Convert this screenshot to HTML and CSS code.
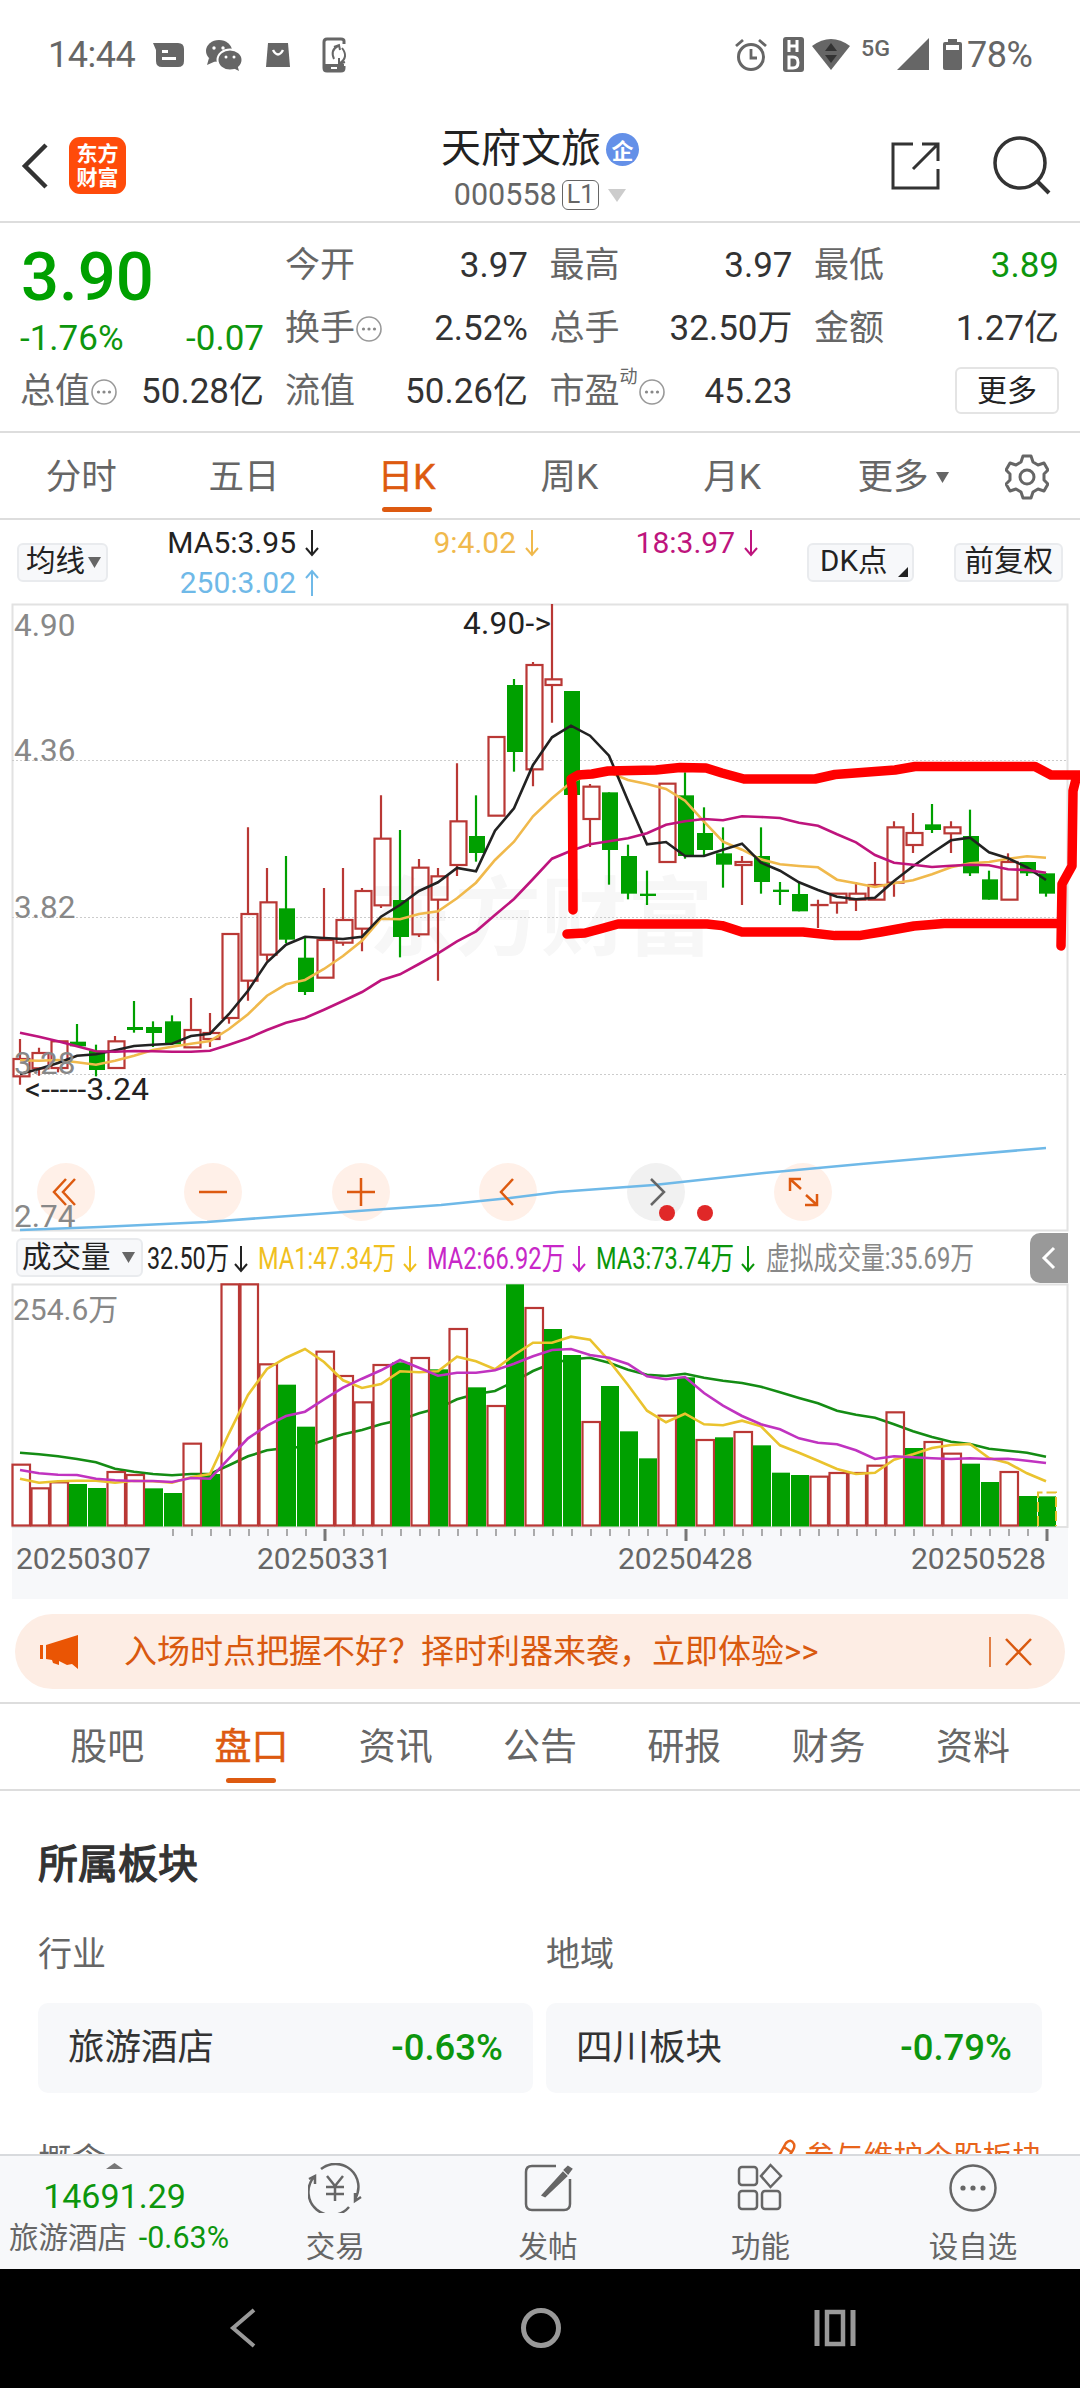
FILE: index.html
```html
<!DOCTYPE html>
<html lang="zh-CN">
<head>
    <meta charset="UTF-8">
    <meta name="viewport" content="width=device-width, initial-scale=1.0">
    <title>天府文旅 000558</title>
    <link rel="stylesheet" href="styles.css">
</head>
<body>
    <svg width="0" height="0" class="defs">
        <symbol id="down" viewBox="0 0 16 30"><path d="M8 2V27M2 20L8 27L14 20" fill="none" stroke="currentColor" stroke-width="2"/></symbol>
        <symbol id="up" viewBox="0 0 16 30"><path d="M8 28V3M2 10L8 3L14 10" fill="none" stroke="currentColor" stroke-width="2"/></symbol>
        <symbol id="info" viewBox="0 0 26 26"><circle cx="13" cy="13" r="12" fill="none" stroke="#999" stroke-width="1.6"/><g fill="#888"><circle cx="7.5" cy="13" r="1.6"/><circle cx="13" cy="13" r="1.6"/><circle cx="18.5" cy="13" r="1.6"/></g></symbol>
    </svg>

    <div class="status-bar">
        <span class="clock">14:44</span>
        <svg class="status-left" width="200" height="40" viewBox="150 36 200 40" fill="#666">
            <path d="M153 43H178Q184 43 184 49V61Q184 67 178 67H162Q156 67 156 61V50Z"/>
            <path d="M162 50H168V53H162ZM162 57H176V60H162Z" fill="#fff"/>
            <ellipse cx="219" cy="51" rx="13" ry="11"/><path d="M209 58L207 65L216 61Z"/>
            <ellipse cx="230" cy="60" rx="12.500" ry="10.500" stroke="#fff" stroke-width="2"/><path d="M233 68L239 71L237 64Z"/>
            <g fill="#fff"><circle cx="214" cy="48" r="1.700"/><circle cx="223" cy="48" r="1.700"/><circle cx="226" cy="57" r="1.500"/><circle cx="234" cy="57" r="1.500"/></g>
            <path d="M268 43H288L290 67H266Z"/>
            <path d="M273 50Q278 59 283 50" fill="none" stroke="#fff" stroke-width="2.500"/>
            <path d="M344 44V41Q344 39 341 39H327Q324 39 324 42V68Q324 71 327 71H341Q344 71 344 68V66" fill="none" stroke="#666" stroke-width="3"/>
            <path d="M324 64H344V70H324Z"/><path d="M331 67H337V69H331Z" fill="#fff"/>
            <path d="M334 59Q330 50 338 46M334 47L339 45L340 50M342 48Q349 57 340 63M339 58L339 64L345 62" fill="none" stroke="#666" stroke-width="2"/>
        </svg>
        <svg class="status-right" width="235" height="40" viewBox="732 36 235 40" fill="#666">
            <circle cx="751" cy="57" r="12.500" fill="none" stroke="#666" stroke-width="3"/>
            <path d="M751 49V58H757M736 46L743 40M766 46L759 40" fill="none" stroke="#666" stroke-width="2.800"/>
            <rect x="783" y="37" width="21" height="35" rx="3"/>
            <path d="M789 40V52M797 40V52M789 46H797M789 57V68H793Q798 68 798 62.500Q798 57 793 57Z" fill="none" stroke="#fff" stroke-width="3"/>
            <path d="M812 46Q831 32 850 46L831 70Z"/><path d="M831 43L837 51H825ZM831 63L837 55H825Z" fill="#333"/>
            <text x="861" y="56" font-size="22" font-weight="500" textLength="29" lengthAdjust="spacingAndGlyphs">5G</text>
            <path d="M929 38V70H897Z"/>
            <path d="M948 39H957V42H960Q962 42 962 44V68Q962 70 960 70H945Q943 70 943 68V44Q943 42 945 42H948Z"/><path d="M946 45H959V50H946Z" fill="#fff"/>
        </svg>
        <span class="battery">78%</span>
    </div>

    <header class="header">
        <svg class="back" width="28" height="50" viewBox="0 0 28 50"><path d="M25 4L4 25L25 46" fill="none" stroke="#333" stroke-width="4.500"/></svg>
        <div class="logo"><span>东方</span><span>财富</span></div>
        <div class="stock">
            <div class="stock-name">天府文旅<i>企</i></div>
            <div class="stock-code">000558<b>L1</b><svg width="18" height="13"><path d="M0 0H18L9 13Z" fill="#ccc"/></svg></div>
        </div>
        <svg class="share" width="50" height="50" viewBox="0 0 50 50"><path d="M22 3H2V47H47V28M31 3H47V20M47 3L22 28" fill="none" stroke="#333" stroke-width="3"/></svg>
        <svg class="search" width="58" height="60" viewBox="0 0 58 60"><circle cx="27" cy="27" r="25" fill="none" stroke="#333" stroke-width="3.500"/><path d="M44 45L56 57" stroke="#333" stroke-width="4"/></svg>
    </header>

    <section class="quote">
        <div class="quote-main">
            <div class="price">3.90</div>
            <div class="change"><span>-1.76%</span><span>-0.07</span></div>
            <div class="cell"><label>总值<svg class="info"><use href="#info"/></svg></label><span>50.28亿</span></div>
        </div>
        <div class="quote-grid">
            <div class="cell"><label>今开</label><span>3.97</span></div>
            <div class="cell"><label>最高</label><span>3.97</span></div>
            <div class="cell"><label>最低</label><span class="green">3.89</span></div>
            <div class="cell"><label>换手<svg class="info"><use href="#info"/></svg></label><span>2.52%</span></div>
            <div class="cell"><label>总手</label><span>32.50万</span></div>
            <div class="cell"><label>金额</label><span>1.27亿</span></div>
            <div class="cell"><label>流值</label><span>50.26亿</span></div>
            <div class="cell"><label>市盈<sup>动</sup><svg class="info"><use href="#info"/></svg></label><span>45.23</span></div>
            <div class="cell cell-end"><button class="more">更多</button></div>
        </div>
    </section>

    <nav class="periods">
        <a>分时</a><a>五日</a><a class="active">日K</a><a>周K</a><a>月K</a>
        <a>更多<svg width="13" height="11"><path d="M0 0H13L6.500 11Z" fill="#666"/></svg></a>
        <a><svg width="44" height="46" viewBox="0 0 44 46"><path d="M18 2H26L28 8L33 11L39 9L43 16L39 20V26L43 30L39 37L33 35L28 38L26 44H18L16 38L11 35L5 37L1 30L5 26V20L1 16L5 9L11 11L16 8Z" fill="none" stroke="#666" stroke-width="3" stroke-linejoin="round"/><circle cx="22" cy="23" r="7" fill="none" stroke="#666" stroke-width="3"/></svg></a>
    </nav>

    <div class="ma-row">
        <span class="chip">均线<svg width="13" height="11"><path d="M0 0H13L6.500 11Z" fill="#666"/></svg></span>
        <div class="ma-values">
            <span class="ma5">MA5:3.95<svg><use href="#down"/></svg></span>
            <span class="ma9">9:4.02<svg><use href="#down"/></svg></span>
            <span class="ma18">18:3.97<svg><use href="#down"/></svg></span>
            <span class="ma250">250:3.02<svg><use href="#up"/></svg></span>
        </div>
        <span class="chip dk">DK点<svg width="10" height="10"><path d="M10 0V10H0Z" fill="#222"/></svg></span>
        <span class="chip">前复权</span>
    </div>

    <svg class="chart" width="1080" height="629" viewBox="0 0 1080 629">
        <text x="369" y="346" class="watermark">东方财富</text>
        <path d="M12.500 627.500V1.500H1067.500V627.500Z" class="frame"/>
        <path d="M12 157.500H1067M12 314.500H1067M12 471.500H1067" class="grid"/>
        <g fill="#fff0e8">
            <circle cx="66" cy="589" r="29"/><circle cx="213" cy="589" r="29"/><circle cx="361" cy="589" r="29"/>
            <circle cx="508" cy="589" r="29"/><circle cx="656" cy="589" r="29" fill="#f1f1f1"/><circle cx="803" cy="589" r="29"/>
        </g>
        <g id="candles"></g>
        <g id="price-lines"></g>
        <polyline class="line ma250" points="20,627 100,624 207,619 275,614 358,608 441,602 510,595 558,589 654,582 764,570 861,561 964,552 1046,545"/>
        <g class="tools">
            <path d="M66 576L54 589L66 602M75 576L63 589L75 602"/>
            <path d="M199 589H227M347 589H375M361 575V603M513 576L501 589L513 602"/>
            <path d="M651 576L664 589L651 602" stroke="#666"/>
            <path d="M790 588V576H801M790 576L801 586M817 591V602H805M817 602L806 592"/>
        </g>
        <circle cx="667" cy="610" r="8" fill="#e02828"/><circle cx="705" cy="610" r="8" fill="#e02828"/>
        <g class="axis-label">
            <text x="14" y="33">4.90</text><text x="14" y="158">4.36</text><text x="14" y="315">3.82</text>
            <text x="14" y="471">3.28</text><text x="14" y="624">2.74</text>
        </g>
        <text x="463" y="31" class="mark" textLength="88">4.90-&gt;</text>
        <text x="25" y="497" class="mark" textLength="124">&lt;-----3.24</text>
        <g class="scribble">
            <path d="M573 307L572.500 187L571 176L578 172L592 171L608 168L656 167L680 164.500L706 165L722 170L744 176H815L835 171.500L895 167L915 163.500H1035L1051 172L1080 172L1076 176L1073 188L1072 263L1062 281L1061 343"/>
            <path d="M567 331L585 330L600 326L618 321H707L722 322.600L742 329H803L835 332.600H859L881 329L914 323L944 320.600H1060"/>
        </g>
    </svg>

    <div class="vol-row">
        <span class="chip">成交量<svg width="13" height="11"><path d="M0 0H13L6.500 11Z" fill="#666"/></svg></span>
        <svg class="vol-values" width="880" height="50" viewBox="146 0 880 50">
            <g color="#222" fill="#222"><text x="147" y="36" textLength="82" lengthAdjust="spacingAndGlyphs">32.50万</text><use href="#down" x="233" y="11" width="16" height="30"/></g>
            <g color="#f0c020" fill="#f0c020"><text x="258" y="36" textLength="138" lengthAdjust="spacingAndGlyphs">MA1:47.34万</text><use href="#down" x="402" y="11" width="16" height="30"/></g>
            <g color="#c827c8" fill="#c827c8"><text x="427" y="36" textLength="138" lengthAdjust="spacingAndGlyphs">MA2:66.92万</text><use href="#down" x="571" y="11" width="16" height="30"/></g>
            <g color="#0a960a" fill="#0a960a"><text x="596" y="36" textLength="138" lengthAdjust="spacingAndGlyphs">MA3:73.74万</text><use href="#down" x="740" y="11" width="16" height="30"/></g>
            <text x="766" y="36" fill="#888" textLength="208" lengthAdjust="spacingAndGlyphs">虚拟成交量:35.69万</text>
        </svg>
        <span class="collapse"><svg width="16" height="24"><path d="M13 2L3 12L13 22" fill="none" stroke="#fff" stroke-width="3"/></svg></span>
    </div>

    <svg class="volume" width="1080" height="317" viewBox="0 0 1080 317">
        <rect x="12" y="245" width="1056" height="71" fill="#f7f8fa"/>
        <path d="M12.500 244V1.500H1067.500V244Z" class="frame"/>
        <text x="13" y="37" class="vol-max">254.6万</text>
        <g id="bars"></g>
        <g class="dates">
            <text x="16" y="286">20250307</text><text x="257" y="286">20250331</text>
            <text x="618" y="286">20250428</text><text x="911" y="286">20250528</text>
        </g>
    </svg>

    <div class="banner">
        <svg width="42" height="36" viewBox="0 0 42 36" fill="#ea5504"><path d="M1 11H4V25H1ZM7 11L39 1V35L33 30L28 31L20 27V31L14 29L13 26L7 25Z"/></svg>
        <span>入场时点把握不好？择时利器来袭，立即体验&gt;&gt;</span>
        <svg width="44" height="32" viewBox="0 0 44 32" stroke="#d9590f" fill="none"><path d="M1 1V31" stroke-width="1.500"/><path d="M17 3L42 29M42 3L17 29" stroke-width="2.500"/></svg>
    </div>

    <nav class="tabs">
        <a>股吧</a><a class="active">盘口</a><a>资讯</a><a>公告</a><a>研报</a><a>财务</a><a>资料</a>
    </nav>

    <section class="sectors">
        <h2>所属板块</h2>
        <div class="sector-grid">
            <h3>行业</h3><h3>地域</h3>
            <div class="card"><span>旅游酒店</span><b>-0.63%</b></div>
            <div class="card"><span>四川板块</span><b>-0.79%</b></div>
        </div>
        <div class="concept">
            <h3>概念</h3>
            <span><svg width="26" height="38" viewBox="0 0 26 38"><path d="M3 26L15 5Q20 0 23 6Q24 9 22 12L11 30L2 35Z M13 9L20 14" fill="none" stroke="#e8641b" stroke-width="2.500"/></svg>参与维护个股板块</span>
        </div>
    </section>

    <footer class="bottom-bar">
        <div class="index">
            <svg width="17" height="6"><path d="M0 6L8.500 0L17 6Z" fill="#777"/></svg>
            <div class="index-value">14691.29</div>
            <div class="index-name">旅游酒店<span>-0.63%</span></div>
        </div>
        <a><svg viewBox="0 0 54 50"><path d="M13 6A23 23 0 0 1 47 36M41 44A23 23 0 0 1 6 14M1 16L7 13V21M53 34L47 38V30M19 13L27 23L35 13M27 23V38M18 24H36M18 31H36"/></svg>交易</a>
        <a><svg viewBox="0 0 54 50"><path d="M35 3H11Q5 3 5 9V41Q5 47 11 47H43Q49 47 49 41V16"/><path d="M22 32L42 10L45 13L24 33Z M44 7L47 4L50 6L47 10Z" fill="#666"/></svg>发帖</a>
        <a><svg viewBox="0 0 54 50"><rect x="6" y="4" width="18" height="18" rx="3"/><path d="M37.500 2L48 13L37.500 24L28 13Z"/><rect x="6" y="28" width="18" height="18" rx="3"/><rect x="29" y="28" width="18" height="18" rx="3"/></svg>功能</a>
        <a><svg viewBox="0 0 54 50"><circle cx="27" cy="25" r="22.500"/><g fill="#666" stroke="none"><circle cx="17" cy="25" r="2.600"/><circle cx="27" cy="25" r="2.600"/><circle cx="37" cy="25" r="2.600"/></g></svg>设自选</a>
    </footer>

    <div class="system-nav">
        <svg width="30" height="42" viewBox="0 0 30 42"><path d="M26 3L5 21L26 39" fill="none" stroke="#999" stroke-width="4"/></svg>
        <svg class="home" width="42" height="42" viewBox="0 0 42 42"><circle cx="21" cy="21" r="17.500" fill="none" stroke="#999" stroke-width="5"/></svg>
        <svg width="42" height="38" viewBox="0 0 42 38"><path d="M3 1V37M39 1V37" stroke="#999" stroke-width="5"/><rect x="13" y="3" width="16" height="32" fill="none" stroke="#999" stroke-width="4.500"/></svg>
    </div>

    <script>
        // type, high, body top, body bottom, low (thirds of a pixel)
        const candles = `r,1320,1380,1432,1457 r,1346,1362,1408,1430 r,1327,1327,1407,1420 g,1275,1328,1342,1342 g,1337,1355,1413,1432
            r,1311,1327,1407,1407 g,1206,1284,1293,1301 g,1267,1284,1302,1344 g,1249,1267,1336,1336 r,1197,1293,1345,1345
            r,1242,1302,1320,1344 r,1005,1005,1257,1274 r,685,945,1145,1205 r,807,910,1067,1085 g,771,928,1022,1032
            g,1015,1076,1179,1188 r,867,1023,1136,1136 r,807,963,1031,1040 r,867,876,989,1057 r,589,719,919,927
            g,693,903,1014,1075 r,780,806,1006,1014 r,807,832,902,1145 r,493,667,798,831 g,589,711,762,788
            r,414,414,650,650 g,240,258,459,518 r,189,198,511,562 r,15,241,258,371 g,276,276,588,588
            r,555,563,660,744 g,580,580,753,857 g,737,771,884,901 g,815,884,891,918 r,554,554,789,789
            g,520,589,771,779 g,625,702,753,771 g,685,763,797,866 r,771,789,798,918 g,685,771,849,884
            g,849,872,879,918 g,849,885,937,937 r,902,918,918,987 r,884,884,911,944 r,849,884,902,936
            r,789,858,902,902 r,667,685,851,893 r,642,702,738,762 g,615,676,693,702 r,667,685,703,762
            g,632,711,823,831 g,815,841,902,902 r,763,789,902,902 g,789,789,823,831 g,823,823,884,893`.trim().split(/\s+/).map(c => c.split(','));

        const priceLines = {
            ma5: [1425,1410,1392,1370,1366,1354,1341,1337,1334,1311,1304,1245,1175,1090,1037,1013,1017,1020,1013,953,918,876,850,807,817,695,628,498,415,380,410,470,605,736,729,771,771,752,734,791,815,850,873,893,901,896,846,802,762,724,716,760,778,805,843],
            ma9: [1384,1385,1383,1390,1397,1385,1370,1353,1343,1334,1326,1290,1246,1190,1156,1143,1110,1071,1025,959,961,945,937,898,851,783,728,652,598,550,525,520,543,555,570,605,668,728,752,781,796,801,805,842,853,864,853,844,826,805,793,789,779,772,776],
            ma18: [1301,1313,1327,1342,1357,1358,1356,1357,1358,1358,1355,1337,1318,1293,1271,1257,1232,1206,1179,1144,1126,1095,1063,1027,997,948,900,840,779,755,736,727,718,703,677,667,660,664,652,654,657,671,680,706,730,768,791,797,804,800,797,799,811,813,821]
        };

        const volumes = 'r584 r655 r637 g642 g654 r606 r615 g655 g669 r521 g612 r43 r43 r283 g344 g470 r245 r318 r397 r285 g277 r264 g298 r177 g352 r408 g43 r114 g177 g255 r456 g348 g484 g565 r437 g322 r510 g502 r486 g526 g608 g615 r620 r609 r609 r587 r427 g534 r516 r551 g581 g636 r606 g678 g679'.split(' ');

        const volumeLines = {
            vol1: [626,638,634,632,632,638,632,634,638,622,612,490,375,297,263,237,276,331,354,342,304,307,304,260,274,298,255,218,218,200,209,272,345,422,457,431,463,466,452,469,526,548,572,597,612,608,569,553,534,525,522,564,579,610,634],
            vol2: [600,610,614,615,626,631,633,633,636,624,626,565,505,467,438,425,388,353,326,301,270,293,317,308,308,301,281,259,240,237,255,263,282,319,328,321,369,407,438,463,478,505,518,523,541,567,559,562,565,567,565,567,566,572,579],
            vol3: [548,553,559,567,577,596,605,612,616,612,612,586,559,541,534,530,511,493,480,463,450,430,415,388,372,363,335,303,280,268,263,278,299,314,318,311,323,332,339,350,367,384,400,422,434,443,463,484,501,515,522,536,542,548,560]
        };

        const cx = i => 20 + i * 19;
        const polyline = (name, values, top) =>
            `<polyline class="line ${name}" points="${values.map((v, i) => cx(i) + ',' + (v / 3 - top).toFixed(1)).join(' ')}"/>`;

        // Candles
        document.getElementById('candles').innerHTML = candles.map((c, i) => {
            const [h, t, b, l] = c.slice(1).map(v => v / 3 - 4);
            const x = cx(i);
            if (c[0] === 'g') {
                return `<path class="wick-g" d="M${x} ${h}V${l}"/><rect class="body-g" x="${x - 7}" y="${t}" width="16" height="${b - t}"/>`;
            }
            return `<path class="wick-r" d="M${x} ${h}V${t}M${x} ${b}V${l}"/><rect class="body-r" x="${x - 6.5}" y="${t}" width="16" height="${Math.max(b - t, 0.1)}"/>`;
        }).join('');
        document.getElementById('price-lines').innerHTML =
            ['ma9', 'ma5', 'ma18'].map(n => polyline(n, priceLines[n], 4)).join('');

        // Volume bars, moving averages and date ticks
        let html = polyline('vol3', volumeLines.vol3, 13);
        volumes.forEach((v, i) => {
            const y = v.slice(1) / 3 - 13;
            html += v[0] === 'g'
                ? `<rect class="body-g" x="${cx(i) - 8}" y="${y}" width="18" height="${243.5 - y}"/>`
                : `<rect class="body-r" x="${cx(i) - 7.5}" y="${y}" width="17.5" height="${242.5 - y}"/>`;
        });
        html += '<path d="M1038 243V209.500H1056V243" fill="none" stroke="#e8c030" stroke-width="2" stroke-dasharray="10 4"/>';
        html += polyline('vol1', volumeLines.vol1, 13) + polyline('vol2', volumeLines.vol2, 13);
        for (let i = 8; i < 55; i++) {
            const major = i === 16 || i === 35 || i === 54;
            html += `<path class="${major ? 'tick major' : 'tick'}" d="M${cx(i) + 1} 246V${major ? 258 : 253}"/>`;
        }
        document.getElementById('bars').innerHTML = html;
    </script>
</body>
</html>
```

FILE: styles.css
```css
* {
    box-sizing: border-box;
}

body {
    margin: 0;
    width: 1080px;
    height: 2388px;
    overflow: hidden;
    display: flex;
    flex-direction: column;
    background: #fff;
    color: #333;
    font-family: Roboto, "Noto Sans CJK SC", sans-serif;
    line-height: 1.2;
}

svg {
    flex: none;
}

.defs {
    position: absolute;
}

h2, h3 {
    margin: 0;
}

/* status bar */
.status-bar {
    height: 110px;
    display: flex;
    align-items: center;
    padding: 2px 47px 0 48px;
    font-size: 36px;
    color: #666;
}

.clock {
    width: 102px;
    letter-spacing: -0.5px;
}

.status-right {
    margin-left: auto;
}

.battery {
    width: 66px;
    white-space: nowrap;
    letter-spacing: -0.5px;
}

/* header */
.header {
    height: 113px;
    display: flex;
    align-items: center;
    padding: 0 29px 0 21px;
    border-bottom: 2px solid #ddd;
}

.logo {
    width: 57px;
    height: 57px;
    margin-left: 20px;
    border-radius: 11px;
    background: #ff4b0a;
    color: #fff;
    font-size: 21px;
    font-weight: 700;
    line-height: 24px;
    display: flex;
    flex-direction: column;
    align-items: center;
    justify-content: center;
}

.stock {
    flex: 1;
    padding: 5px 0 0 63px;
    display: flex;
    flex-direction: column;
    align-items: center;
}

.stock-name {
    display: flex;
    align-items: center;
    font-size: 40px;
    line-height: 54px;
    color: #222;
}

.stock-name i {
    width: 33px;
    height: 33px;
    margin-left: 5px;
    border-radius: 50%;
    background: #6490e8;
    color: #fff;
    font: 700 22px/32px "Noto Sans CJK SC", sans-serif;
    text-align: center;
}

.stock-code {
    display: flex;
    align-items: center;
    font-size: 30.5px;
    line-height: 38px;
    color: #666;
}

.stock-code b {
    height: 30px;
    margin: 0 9px 0 5px;
    padding: 0 4px;
    border: 1.5px solid #666;
    border-radius: 6px;
    font-size: 25px;
    font-weight: 400;
    line-height: 28px;
}

.share {
    margin-right: 52px;
}

/* quote */
.quote {
    height: 210px;
    display: flex;
    padding: 11px 21px 0 20px;
    border-bottom: 2px solid #ddd;
    font-size: 35px;
}

.quote-main {
    width: 244px;
    margin-right: 21px;
}

.price {
    padding-left: 1px;
    font-size: 67px;
    font-weight: 500;
    line-height: 86px;
    margin-bottom: -2px;
    color: #00a000;
}

.change {
    display: flex;
    justify-content: space-between;
    line-height: 42px;
    color: #0d960d;
}

.quote-grid {
    flex: 1;
    display: grid;
    grid-template-columns: 243px 243px 245px;
    column-gap: 21.5px;
    grid-auto-rows: 63px;
}

.cell {
    height: 63px;
    display: flex;
    justify-content: space-between;
    align-items: center;
    line-height: 63px;
    white-space: nowrap;
}

.cell label {
    display: flex;
    align-items: center;
    color: #666;
}

.cell sup {
    font-size: 18px;
    line-height: 22px;
    margin: -30px 0 0;
}

.cell-end {
    justify-content: flex-end;
}

.green {
    color: #0d960d;
}

.info {
    width: 26px;
    height: 26px;
    margin-left: 1px;
}

.more {
    width: 104px;
    height: 47px;
    margin-top: -2px;
    padding: 0;
    border: 2px solid #e4e4e4;
    border-radius: 6px;
    background: #fff;
    color: #222;
    font: inherit;
    font-size: 30px;
    line-height: 42px;
}

/* periods */
.periods {
    height: 87px;
    display: grid;
    grid-template-columns: repeat(5, 162.7px) 180px 68px;
    border-bottom: 2px solid #ddd;
    font-size: 35.5px;
    color: #666;
}

.periods a,
.tabs a {
    position: relative;
    display: flex;
    align-items: center;
    justify-content: center;
    padding-top: 3px;
}

.periods a:nth-child(6) svg {
    margin-left: 8px;
}

.active {
    color: #dd5a10;
    -webkit-text-stroke: 0.5px #dd5a10;
}

.active::after {
    content: '';
    position: absolute;
    bottom: 6px;
    width: 50px;
    height: 5px;
    border-radius: 3px;
    background: #dd5a10;
}

/* moving averages */
.ma-row {
    height: 84px;
    display: flex;
    align-items: center;
    padding: 0 17px;
}

.chip {
    height: 39px;
    padding: 0 8px;
    border: 2px solid #e9ebee;
    border-radius: 6px;
    background: #f7f8fa;
    display: flex;
    align-items: center;
    font-size: 29.5px;
    color: #222;
    white-space: nowrap;
}

.ma-row .chip:first-child {
    padding: 0 5px 0 7px;
}

.ma-row .chip svg {
    margin-left: 3px;
}

.ma-row .dk {
    margin: 0 40px 0 auto;
    padding: 0 4px 0 11px;
}

.ma-row .dk svg {
    margin: 20px 0 0 11px;
}

.ma-values {
    display: grid;
    grid-template-columns: 212px 220px 219px;
    padding-top: 2px;
    line-height: 40px;
    font-size: 30px;
}

.ma-values span {
    display: flex;
    align-items: center;
    justify-content: flex-end;
}

.ma-values svg {
    width: 16px;
    height: 30px;
    margin-left: 8px;
}

.ma5 { color: #222; }
.ma9 { color: #f0b94c; }
.ma18 { color: #be147d; }
.ma250 { color: #6fb9e8; }
.vol1 { color: #eac32e; }
.vol2 { color: #c033c0; }
.vol3 { color: #148c14; }

/* charts */
.chart,
.volume {
    display: block;
}

.chart {
    margin-top: -1px;
}

.frame {
    fill: none;
    stroke: #e2e2e2;
    stroke-width: 2;
}

.grid {
    stroke: #ccc;
    stroke-width: 1;
    stroke-dasharray: 2 2;
}

.line {
    fill: none;
    stroke: currentColor;
    stroke-width: 2.6;
}

.watermark {
    font-size: 86px;
    font-weight: 700;
    fill: #f7f7f7;
}

.wick-g, .wick-r, .body-r {
    fill: none;
    stroke-width: 2.2;
    stroke: #b93835;
}

.wick-g {
    stroke: #00a000;
}

.body-g {
    fill: #00a000;
}

.axis-label {
    font-size: 31.5px;
    fill: #888;
}

.mark {
    font-size: 31.5px;
    fill: #222;
}

.tools {
    fill: none;
    stroke: #dd5a10;
    stroke-width: 2.5;
}

.scribble {
    fill: none;
    stroke: #f00;
    stroke-width: 9.5;
    stroke-linecap: round;
    stroke-linejoin: round;
}

.vol-row {
    height: 51px;
    display: flex;
    align-items: center;
    padding: 0 12px 0 16px;
}

.vol-row .chip {
    width: 127px;
    justify-content: space-between;
    padding: 0 6px 0 4px;
}

.vol-values {
    margin-left: 3px;
    font-size: 31px;
}

.collapse {
    width: 38px;
    height: 50px;
    margin-left: auto;
    border-radius: 10px 0 0 10px;
    background: #999;
    display: flex;
    align-items: center;
    justify-content: center;
}

.vol-max {
    font-size: 30px;
    fill: #888;
}

.dates {
    font-size: 30px;
    fill: #666;
}

.tick {
    stroke: #777;
    stroke-width: 1.2;
}

.tick.major {
    stroke-width: 3;
}

/* banner */
.banner {
    height: 75px;
    margin: 14px 15px 13px;
    padding: 0 32px 0 24px;
    border-radius: 38px;
    background: #fdede4;
    color: #d9590f;
    font-size: 33px;
    display: flex;
    align-items: center;
}

.banner span {
    flex: 1;
    margin-left: 43px;
    white-space: nowrap;
}

/* tabs */
.tabs {
    height: 89px;
    display: grid;
    grid-template-columns: repeat(7, 144.3px);
    padding-left: 35px;
    border-top: 2px solid #ddd;
    border-bottom: 2px solid #ddd;
    font-size: 37px;
    color: #666;
}

/* sectors */
.sectors {
    height: 363px;
    overflow: hidden;
    padding: 46px 38px 0;
}

.sectors h2 {
    font-size: 40px;
    font-weight: 400;
    -webkit-text-stroke: 1.3px #333;
    line-height: 56px;
}

.sectors h3 {
    font-size: 34px;
    font-weight: 400;
    color: #666;
    line-height: 50px;
}

.sector-grid {
    display: grid;
    grid-template-columns: 495px 496px;
    gap: 24px 13px;
    margin-top: 36px;
}

.card {
    height: 90px;
    padding: 0 30px;
    border-radius: 10px;
    background: #f7f8fa;
    display: flex;
    justify-content: space-between;
    align-items: center;
    font-size: 36.5px;
}

.card b {
    font-weight: 500;
    color: #0d960d;
}

.concept {
    display: flex;
    justify-content: space-between;
    margin-top: 43px;
}

.concept span {
    display: flex;
    align-items: center;
    gap: 8px;
    height: 42px;
    font-size: 29.7px;
    color: #e8641b;
}

/* bottom bar */
.bottom-bar {
    height: 115px;
    display: flex;
    border-top: 2px solid #d8dadd;
    background: #f7f8fa;
    color: #666;
    font-size: 29.5px;
}

.index {
    width: 229px;
    padding-top: 7px;
    display: flex;
    flex-direction: column;
    align-items: center;
}

.index-value {
    font-size: 34px;
    line-height: 54px;
    color: #0d960d;
}

.index-name {
    width: 220px;
    line-height: 30px;
    display: flex;
    justify-content: space-between;
    margin-left: 9px;
    white-space: nowrap;
}

.index-name span {
    font-size: 30.5px;
    color: #0d960d;
}

.bottom-bar a {
    width: 212.6px;
    padding-top: 7px;
    display: flex;
    flex-direction: column;
    align-items: center;
    line-height: 44px;
}

.bottom-bar a svg {
    width: 54px;
    height: 50px;
    margin-bottom: 12px;
    fill: none;
    stroke: #666;
    stroke-width: 2.5;
}

.system-nav {
    flex: 1;
    background: #000;
    display: flex;
    align-items: center;
    justify-content: space-between;
    padding: 0 224px 2px 228px;
}

.home {
    margin-left: 9px;
}
```
